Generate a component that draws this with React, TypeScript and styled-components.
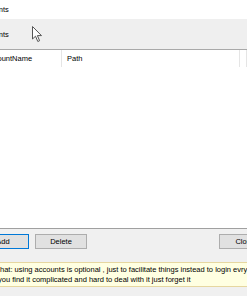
import React from 'react';
import styled, { createGlobalStyle } from 'styled-components';

const GlobalStyle = createGlobalStyle`
    html, body {
        margin: 0;
        padding: 0;
        background: #ffffff;
    }
    body {
        font-family: 'Liberation Sans', Arial, sans-serif;
        font-size: 7.5px;
        color: #000000;
    }
`;

const Viewport = styled.div`
    width: 247px;
    height: 296px;
    overflow: hidden;
    display: flex;
    flex-direction: column;
    background: #f0f0f0;
`;

const TitleBar = styled.div`
    height: 19px;
    flex: none;
    display: flex;
    align-items: center;
    background: #ffffff;
    white-space: nowrap;
    padding-left: 0;
`;

const Clipped = styled.span<{ $shift: number }>`
    margin-left: ${(p) => p.$shift}px;
    white-space: nowrap;
`;

const TabStrip = styled.div`
    height: 30px;
    flex: none;
    display: flex;
    align-items: center;
    background: #efefef;
    border-bottom: 1px solid #a9a9a9;
    position: relative;
`;

const Cursor = styled.svg`
    position: absolute;
    left: 32px;
    top: 7px;
`;

const List = styled.div`
    flex: 1;
    display: flex;
    flex-direction: column;
    background: #ffffff;
    border-bottom: 1px solid #a0a0a0;
`;

const HeaderRow = styled.div`
    height: 17px;
    display: grid;
    grid-template-columns: 62px 178px 7px;
    align-items: stretch;
`;

const HeaderCell = styled.div<{ $first?: boolean }>`
    display: flex;
    align-items: center;
    padding-left: ${(p) => (p.$first ? 0 : 5)}px;
    border-right: 1px solid #e5e5e5;
    overflow: hidden;
    white-space: nowrap;
`;

const Footer = styled.div`
    flex: none;
    height: 62px;
    display: flex;
    flex-direction: column;
    padding-top: 5px;
`;

const ButtonRow = styled.div`
    display: flex;
    gap: 6px;
    height: 15px;
    margin-left: -23px;
`;

const Button = styled.div<{ $default?: boolean }>`
    width: 50px;
    height: 13px;
    flex: none;
    display: flex;
    align-items: center;
    justify-content: center;
    background: #e1e1e1;
    border: 1px solid ${(p) => (p.$default ? '#0078d7' : '#adadad')};
`;

const Spacer = styled.div`
    flex: 1;
`;

const Note = styled.div`
    margin-top: 13px;
    height: 23px;
    display: flex;
    flex-direction: column;
    justify-content: center;
    background: #ffffe1;
    border-top: 1px solid #e6d7a0;
    border-bottom: 1px solid #e6d7a0;
    line-height: 9.4px;
    white-space: nowrap;
`;

export default function App() {
    return (
        <>
            <GlobalStyle />
            <Viewport>
                <TitleBar>
                    <Clipped $shift={-22}>Accounts</Clipped>
                </TitleBar>
                <TabStrip>
                    <Clipped $shift={-22}>Accounts</Clipped>
                    <Cursor width="11" height="17" viewBox="0 0 11 17">
                        <path
                            d="M0.5 0.5 L0.5 13 L3.5 10.2 L5.8 15.5 L7.6 14.7 L5.4 9.6 L9.5 9.6 Z"
                            fill="#ffffff"
                            stroke="#555555"
                            strokeWidth="1"
                            strokeLinejoin="round"
                        />
                    </Cursor>
                </TabStrip>
                <List>
                    <HeaderRow>
                        <HeaderCell $first>
                            <Clipped $shift={-15}>AccountName</Clipped>
                        </HeaderCell>
                        <HeaderCell>Path</HeaderCell>
                        <HeaderCell />
                    </HeaderRow>
                </List>
                <Footer>
                    <ButtonRow>
                        <Button $default>Add</Button>
                        <Button>Delete</Button>
                        <Spacer />
                        <Button style={{ marginRight: -24 }}>Close</Button>
                    </ButtonRow>
                    <Note>
                        <Clipped $shift={0}>hat: using accounts is optional , just to facilitate things instead to login evry time, if</Clipped>
                        <Clipped $shift={-2}>you find it complicated and hard to deal with it just forget it</Clipped>
                    </Note>
                </Footer>
            </Viewport>
        </>
    );
}
